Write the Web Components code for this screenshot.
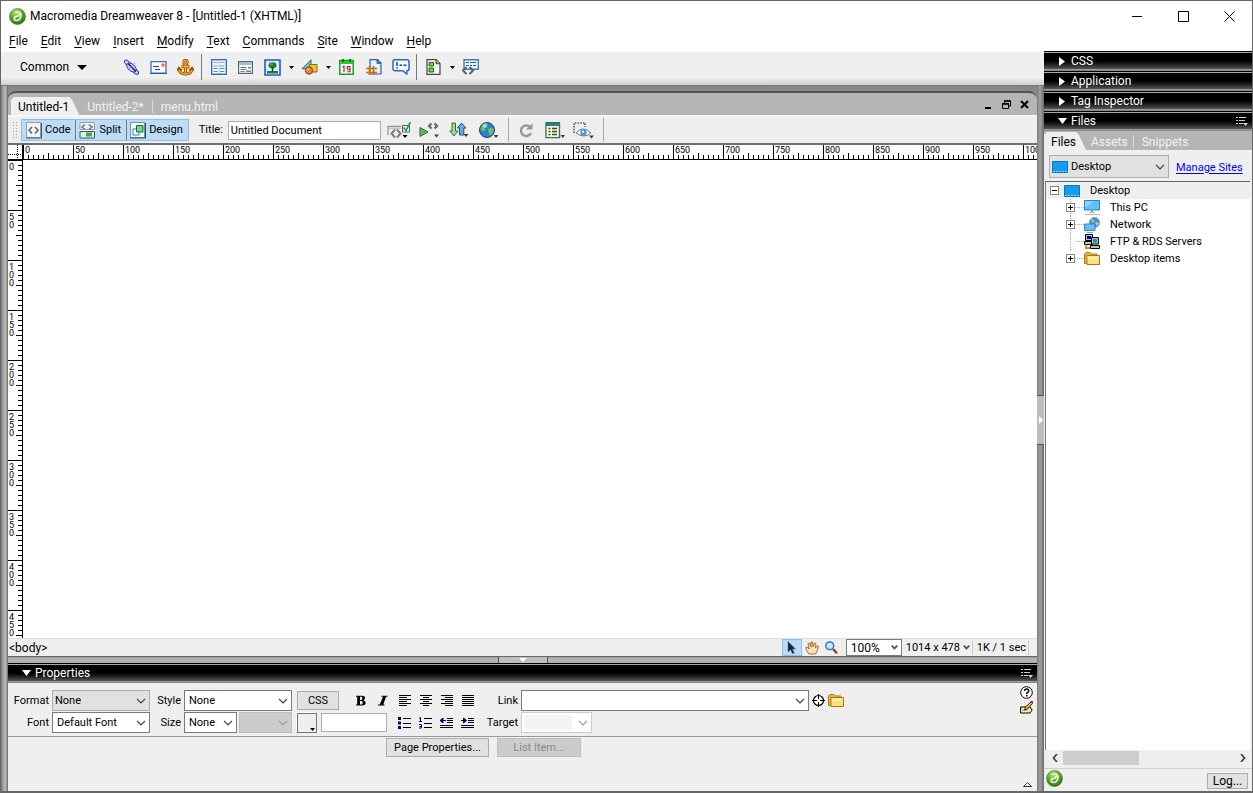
<!DOCTYPE html>
<html lang="en">
<head>
<meta charset="utf-8">
<title>Macromedia Dreamweaver 8</title>
<style>
  html, body { margin: 0; height: 100%; }
  body { font: 11px/14px Roboto, "Liberation Sans", sans-serif; color: #000; background: #555; overflow: hidden; }
</style>
</head>
<body>
<dw-app></dw-app>
<script>
const ICONS = {
  logo: [17, 17, `<defs><radialGradient id="g" cx=".4" cy=".25" r=".8"><stop offset="0" stop-color="#b4e878"/><stop offset=".5" stop-color="#58a828"/><stop offset="1" stop-color="#2a7014"/></radialGradient></defs><circle cx="8.500" cy="8.500" r="8" fill="url(#g)" stroke="#3c7a1c" stroke-width=".6"/><path d="M6.500 4.200Q12.200 3 12 7.500Q11.500 12.300 7.500 12.500Q4.800 12.300 5.200 10.200Q6 8 9.500 8Q9.500 6.500 11 5.500" fill="none" stroke="#f4ffe6" stroke-width="1.600"/>`],
  min: [11, 11, `<path d="M0 5.500h10" stroke="#000" fill="none"/>`],
  max: [11, 11, `<path d="M.5.5h10v10h-10z" stroke="#000" fill="none"/>`],
  close: [11, 11, `<path d="M.5.5l10 10M10.500.5l-10 10" stroke="#000" fill="none"/>`],
  down: [5, 3, `<path d="M0 0h5L2.500 3z"/>`],
  bigdown: [10, 5, `<path d="M0 0h10L5 5z"/>`],
  downlight: [9, 6, `<path d="M0 0h9L4.500 6z" fill="#fff"/>`],
  rightlight: [6, 9, `<path d="M0 0v9l6-4.500z" fill="#fff"/>`],
  handledown: [8, 4, `<path d="M0 0h8L4 4z" fill="#fff"/>`],
  handleright: [4, 8, `<path d="M0 0v8l4-4z" fill="#fff"/>`],
  uptri: [9, 5, `<path d="M.5 4.500h8L4.500.7z" fill="#fff" stroke="#000" stroke-width=".8"/>`],
  chev: [10, 6, `<path d="M1 1l4 4 4-4" fill="none" stroke="currentColor" stroke-width="1.200"/>`],
  chevs: [7, 5, `<path d="M.7.7L3.500 3.500 6.300.7" fill="none" stroke="#555" stroke-width="1.800"/>`],
  chevleft: [6, 8, `<path d="M5 0L1.500 4 5 8" fill="none" stroke="#444" stroke-width="1.800"/>`],
  chevright: [6, 8, `<path d="M1 0l3.500 4L1 8" fill="none" stroke="#444" stroke-width="1.800"/>`],
  options: [13, 10, `<path d="M0 1.500h2M0 4.500h2M0 7.500h2M3 1.500h7M3 4.500h6M3 7.500h4" stroke="#d0d0d0" stroke-width="1.200"/><path d="M7 7h5L9.500 10z" fill="#d0d0d0"/>`],
  link: [17, 17, `<g fill="#c3c7fa" stroke="#33339a" stroke-width=".9"><ellipse cx="5" cy="4.500" rx="4.600" ry="2.200" transform="rotate(42 5 4.500)"/><ellipse cx="12" cy="12" rx="4.600" ry="2.200" transform="rotate(42 12 12)"/><ellipse cx="8.500" cy="8.500" rx="5.600" ry="3.400" transform="rotate(42 8.500 8.500)"/></g><path d="M5 4.500l8 8" stroke="#15155a" stroke-width="1.200"/><path d="M5 10l7-6" stroke="#8d90dd"/>`],
  mail: [17, 13, `<path d="M1 .7h15v11.500H1z" fill="#f4faff" stroke="#3b6fc4" stroke-width="1.300"/><path d="M0 12.500h17" stroke="#2858a8"/><path d="M3 5.500h6M5 8.500h5" stroke="#2d3f66" stroke-width="1.200"/><path d="M11.500 2.500h3v3h-3z" fill="#f06a20"/>`],
  anchor: [17, 17, `<g fill="none" stroke="#a35200"><circle cx="8.500" cy="3" r="2" stroke-width="2.400"/><path d="M8.500 5v11M4.500 7.500h8" stroke-width="3.400"/><path d="M2 10Q2.500 15 8.500 15Q14.500 15 15 10M.7 12L2 9.500l2.500 2.200M16.300 12L15 9.500l-2.500 2.200" stroke-width="2.800"/></g><g fill="none" stroke="#f8ac34"><circle cx="8.500" cy="3" r="2"/><path d="M8.500 5v10M5 7.500h7M1.800 11Q4 15 8.500 15Q13 15 15.200 11" stroke-width="1.400"/></g>`],
  table: [16, 16, `<path d="M.7.7h14.600v14.600H.7z" fill="#fff" stroke="#3b6fb4" stroke-width="1.400"/><path d="M2.500 3.500h4M9 3.500h4.500M2.500 7h4M9 7h4.500M2.500 9.500h4M9 9.500h4.500M2.500 12.500h4M9 12.500h4.500" stroke="#4a8fc8"/><path d="M8 1v14" stroke="#8fb7dc"/><path d="M1 1h14v3H1z" fill="#b9dcf5" opacity=".4"/>`],
  layout: [15, 13, `<path d="M.6.6h13.800v11.800H.6z" fill="#fff" stroke="#516a80" stroke-width="1.200"/><path d="M1 1h13v3H1z" fill="#a9bccb"/><path d="M2.500 6.500h6M2.500 8.500h6M2.500 10.500h4" stroke="#678"/><path d="M10 6h3v1.500h-3zM8 9.500h5V11H8z" fill="#6c8f50"/>`],
  image: [17, 17, `<path d="M1 1h15v15H1z" fill="#d8efff" stroke="#2457dd" stroke-width="1.600"/><path d="M3 12h11v2.500H3z" fill="#1f7d28"/><ellipse cx="8.500" cy="6.300" rx="4" ry="3.100" fill="#1d7c2b"/><path d="M8.500 8.500v4" stroke="#45240c" stroke-width="1.400"/><circle cx="7.500" cy="5.300" r="1.300" fill="#4faf4d"/>`],
  media: [17, 16, `<path d="M10 .8v9H1z" fill="#78cdb8" stroke="#17705f"/><path d="M8.500 5.500h7.500v7.500H8.500z" fill="#efc62c" stroke="#8b6914"/><circle cx="8" cy="11.500" r="3.700" fill="#ee7a42" stroke="#a33b12"/><circle cx="7" cy="10.500" r="1.200" fill="#ffc49d"/>`],
  date: [15, 16, `<path d="M.8 1.500h13.400v13.700H.8z" fill="#fff" stroke="#18a020" stroke-width="1.500"/><path d="M1 2h13v3H1z" fill="#2cc935"/><path d="M4 0v3M11 0v3" stroke="#0a6a10" stroke-width="1.600"/><path d="M3.500 8L5 7.200V13M11 10.300H8.200V7.500H11v5.200H8.200" fill="none" stroke="#b0102a" stroke-width="1.100"/>`],
  include: [16, 16, `<path d="M4 .6h7.500L15 4v11H4z" fill="#e7effb" stroke="#2e5fb0" stroke-width="1.200"/><path d="M11 .6V4.400h4z" fill="#4c86dd" stroke="#2e5fb0"/><path d="M3.500 7v9M7.500 7v9M0 9.500h11M0 13.500h11" stroke="#c9700a" stroke-width="1.700"/>`],
  comment: [18, 16, `<path d="M3 .8h12q2 0 2 2v7q0 2-2 2l-.2 3.400-4-3.400H3.500q-2.500 0-2.500-2v-7q0-2 2-2z" fill="#f4f8ff" stroke="#2d63cc" stroke-width="1.500"/><path d="M5 3v4M5 8.300v1.500M7.500 6.300h2.500M11.500 6.300h3" stroke="#1b3f9c" stroke-width="1.500"/>`],
  template: [15, 16, `<path d="M1 .7h9L14 4.500v10.800H1z" fill="#f3f7ee" stroke="#444" stroke-width="1.200"/><path d="M10 .7v4h4" fill="#9cc27b" stroke="#444"/><path d="M3 3.500h4.500V7H3zM3 9h4.500v4H3z" fill="#86cf4c" stroke="#126d16"/>`],
  tagc: [17, 16, `<path d="M2 .7h14.300v9.600H2z" fill="#eef6ff" stroke="#3d7acb" stroke-width="1.400"/><path d="M4 3.500h3M8 3.500h6M4 6.500h3M8 6.500h2M11 6.500h3" stroke="#2858a8"/><path d="M4.500 8l-3.500 3.500L4.500 15M7.500 8l3.500 3.500L7.500 15" fill="none" stroke="#666" stroke-width="2.200"/>`],
  code: [16, 17, `<path d="M.5.5h14v15H.5z" fill="#f2f5f7" stroke="#8ba0ae"/><path d="M0 16h15.500V1" fill="none" stroke="#4a5a66" stroke-width="1.200"/><path d="M6 5L3 8.200 6 11.500M9 5l3 3.200L9 11.500" fill="none" stroke="#666" stroke-width="1.600"/>`],
  split: [17, 17, `<path d="M1 .5h14.500v7H1z" fill="#eef2f4" stroke="#8ba0ae"/><path d="M6 2.500L3 5 6 7.500M10 2.500l3 2.500L10 7.500" fill="none" stroke="#777" stroke-width="1.600"/><path d="M1 9.500h14.500v6.500H1z" fill="#dff3e4" stroke="#33586c"/><path d="M7 10.500h6v4H7z" fill="#46a255"/><path d="M0 8.500h17" stroke="#fff"/>`],
  design: [16, 17, `<path d="M.5.5h14v15H.5z" fill="#f4fafd" stroke="#6a96b6"/><path d="M0 16h15.500V1" fill="none" stroke="#27507c" stroke-width="1.200"/><path d="M3 7h6v6H3z" fill="#fff" stroke="#2a80b8"/><path d="M6.500 3.500h6.500v6.500H6.500z" fill="#7fd08f" stroke="#187331"/>`],
  validate: [24, 17, `<path d="M1 13V4.500h13" fill="none" stroke="#8a97a3" stroke-width="1.300"/><path d="M1 6.500h13" stroke="#bac3cb"/><path d="M8 7.500l-3.500 4L8 15.500M10 7.500l3.500 4-3.500 4" fill="none" stroke="#777" stroke-width="1.900"/><path d="M15.500 3.500h7v6.500h-7z" fill="#fff" stroke="#3b6550"/><path d="M16.500 5.500l2.500 3L23.500 0" fill="none" stroke="#2b9a3a" stroke-width="1.700"/><path d="M15.500 13h5l-2.500 3z"/>`],
  debug: [20, 16, `<path d="M1 5.500l8 4.500-8 4.500z" fill="#5fbb57" stroke="#1f6f2a"/><path d="M12.500 1.500L10 4l2.500 2.500M15.500 1.500L18 4l-2.500 2.500" fill="none" stroke="#666" stroke-width="2.200"/><path d="M15 12.500h5L17.500 15.500z" fill="#4e3e00"/>`],
  files: [20, 16, `<path d="M3 1h3.500v8H9L5 14 .8 9H3z" fill="#a6dc8f" stroke="#27713a"/><path d="M10.500 13V6H8.300L12.500 1 17 6h-2.200v7z" fill="#6aa9dc" stroke="#1e4f86"/><path d="M14.500 12h5L17 15z" fill="#4e3e00"/>`],
  globe: [20, 17, `<circle cx="8" cy="8" r="7.500" fill="#2a7fd0" stroke="#173f80"/><path d="M3 3q3-3 6-1.500L8 4 5.500 5.500l1 2L4 9.500 1.500 7zM9 7l4-1.500 2 2-1.500 4-3 2-1-3.500z" fill="#6cc25a"/><circle cx="6" cy="4" r="2" fill="#d8f3ff" opacity=".6"/><path d="M14.500 13h5L17 16z" fill="#4e3e00"/>`],
  refresh: [15, 15, `<path d="M10.500 3.500A5.300 5.300 0 1 0 12 10" fill="none" stroke="#999" stroke-width="2.400"/><path d="M13.500 0v6.500H7z" fill="#999"/>`],
  viewopt: [20, 17, `<path d="M1 .7h13.500v15H1z" fill="#fdf7cf" stroke="#2c6f6f" stroke-width="1.300"/><path d="M1 1h13.500v3H1z" fill="#2d8080"/><path d="M3.500 6.500h2M3.500 9.500h2M3.500 12.500h2M7 6.500h5M7 9.500h5M7 12.500h5" stroke="#394a40" stroke-width="1.300"/><path d="M15.500 13h4.500l-2.200 3z" fill="#4e3e00"/>`],
  visual: [21, 17, `<path d="M1 11V1h11v4" fill="none" stroke="#222" stroke-width="1.200" stroke-dasharray="1.500 1.200"/><path d="M3 11q7-8 15 0-7 6-15 0z" fill="#fff" stroke="#667788"/><circle cx="10.500" cy="10.500" r="3.200" fill="#4c94e0"/><circle cx="10" cy="9.700" r="1.200" fill="#dcf0ff"/><path d="M16 13.500h5L18.500 16.500z" fill="#4e3e00"/>`],
  dmin: [7, 9, `<path d="M0 8h6" stroke="#000" stroke-width="2"/>`],
  drest: [9, 9, `<path d="M2.500 3V1h6v5H7M.5 3.500h6v5h-6z" fill="none" stroke="#000"/><path d="M2 1h7M0 4h7" stroke="#000" stroke-width="1.600"/>`],
  dclose: [9, 9, `<path d="M1 1l7 7M8 1L1 8" stroke="#000" stroke-width="2"/>`],
  pointer: [9, 13, `<path d="M1 .5v10.500l2.500-2.300 2 4 1.800-.8-1.800-3.900h3z" fill="#12283c" stroke="#4d6a80" stroke-width=".5"/>`],
  hand: [14, 14, `<path d="M4 13Q1 9.500.7 6.500L2.300 6 4 8 3 2.500l1.500-.6L6 6V1h1.600L8 6l1.500-4 1.400.5L10.500 7l2-2.500 1 .7Q12.500 10 10.500 13z" fill="#fde0b4" stroke="#a0652f" stroke-width=".9"/>`],
  zoom: [13, 13, `<circle cx="4.800" cy="4.800" r="3.900" fill="#cfeaff" stroke="#3575cb" stroke-width="1.500"/><path d="M8 8l4 4.300" stroke="#a3402a" stroke-width="2.500"/>`],
  bold: [11, 11, `<path d="M0 .7h6q3 0 3 2.400 0 1.700-1.800 2.200Q9.700 5.800 9.700 7.800q0 2.700-3.500 2.700H0V9.500h1.200V1.700H0zM4 1.700V5h1.200q1.200 0 1.200-1.700T5.200 1.700zM4 6v3.500h1.300q1.400 0 1.400-1.800T5.300 6z" fill-rule="evenodd"/>`],
  italic: [10, 11, `<path d="M3.500.7h6v1H8L5.300 9.500H6.500v1H0v-1h1.800L5 1.700H3.500z"/>`],
  left: [12, 12, `<path d="M0 .5h12M0 2.500h8M0 4.500h12M0 6.500h8M0 8.500h12M0 10.500h8" stroke="#000"/>`],
  center: [12, 12, `<path d="M0 .5h12M3 2.500h6M0 4.500h12M3 6.500h6M0 8.500h12M3 10.500h6" stroke="#000"/>`],
  right: [12, 12, `<path d="M0 .5h12M4 2.500h8M0 4.500h12M4 6.500h8M0 8.500h12M4 10.500h8" stroke="#000"/>`],
  justify: [12, 12, `<path d="M0 .5h12M0 2.500h12M0 4.500h12M0 6.500h12M0 8.500h12M0 10.500h12" stroke="#000"/>`],
  ul: [13, 12, `<path d="M0 0h3v3H0zM0 4.500h3v3H0zM0 9h3v3H0z" fill="#000080"/><path d="M5 1.500h8M5 6.500h8M5 10.500h8" stroke="#000"/>`],
  ol: [13, 12, `<path d="M0 1.500l1.500-1v4M0 4.500h3M0 7.500h2.500v3.500H0M.5 9.500h2" fill="none" stroke="#000080"/><path d="M5 1.500h8M5 6.500h8M5 10.500h8" stroke="#000"/>`],
  outdent: [13, 12, `<path d="M7 1.500h6M7 3.500h6M7 5.500h6M0 8.500h13M0 10.500h13" stroke="#000" stroke-width="1.200"/><path d="M0 3.500L3 1v5zM3 3.500h3" fill="#000080" stroke="#000080"/>`],
  indent: [13, 12, `<path d="M7 1.500h6M7 3.500h6M7 5.500h6M0 8.500h13M0 10.500h13" stroke="#000" stroke-width="1.200"/><path d="M5.500 3.500L2.500 1v5zM0 3.500h3" fill="#000080" stroke="#000080"/>`],
  target: [13, 13, `<circle cx="6.500" cy="6.500" r="5" fill="#fff" stroke="#000" stroke-width="1.200"/><path d="M6.500 0v5M6.500 8v5M0 6.500h5M8 6.500h5" stroke="#000"/>`],
  folder: [16, 13, `<path d="M.5 11.500V2L2 .5h4L7.500 2H13v9.500z" fill="#e8b93e" stroke="#a97a18"/><path d="M2.800 3.500h12.700v9H3z" fill="#ffe07c" stroke="#a9780f"/><path d="M4 5h10M4 6.500h10" stroke="#fff4b8"/>`],
  help: [13, 13, `<circle cx="6.500" cy="6.500" r="5.800" fill="#fff" stroke="#000"/><path d="M4.500 5Q4.700 3 6.700 3t2 2q0 1-1.400 1.700-.6.400-.6 1.300" fill="none" stroke="#000" stroke-width="1.500"/><path d="M6 9h1.500v1.500H6z"/>`],
  pencil: [13, 13, `<path d="M.6 6h9.500l2 3-2 3H.6z" fill="#fff5a6" stroke="#000"/><path d="M2 9h6" stroke="#887"/><path d="M4.500 9l1-3L11 1l1.500 1.500L7.500 8z" fill="#f3bd43" stroke="#000" stroke-width=".8"/><path d="M10 0h3v2.500z" fill="#b32b1d"/>`],
  desktop: [16, 12, `<path d="M.5.5h15v11H.5z" fill="#149bf2" stroke="#0874bd"/><path d="M1 10.500h14" stroke="#9edbff" stroke-dasharray="2 1"/>`],
  pc: [16, 15, `<path d="M.5.5h15v9.500H.5z" fill="#61c0fa" stroke="#2583c4"/><path d="M1 8L10 1H1z" fill="#9cdcff" opacity=".7"/><path d="M5 12.500h6M1 14.500h15" stroke="#a8b8c4"/><path d="M8 10v2" stroke="#8c9fae" stroke-width="2"/>`],
  network: [16, 16, `<circle cx="10.500" cy="5.500" r="5" fill="#4d91c3" stroke="#7e9bb0"/><path d="M7 2l3 1-1 3zM11 5l4 1-2 3z" fill="#b5d9df"/><path d="M.5 7h10.500v6.500H.5z" fill="#62bff8" stroke="#3b86b8"/><path d="M3 15.500h6" stroke="#8c9fae"/>`],
  ftp: [16, 15, `<path d="M1.500.5h7v6h-7z" fill="#c0c0c0" stroke="#000"/><path d="M3 2h4v3H3z" fill="#0000a8"/><path d="M.5 7.500h8v3h-8z" fill="#c0c0c0" stroke="#000"/><path d="M7.500 3.500h7v6.500h-7z" fill="#c0c0c0" stroke="#000"/><path d="M9 5h4v3.500H9z" fill="#00a0a0"/><path d="M6.500 11.500h9v3h-9z" fill="#c0c0c0" stroke="#000"/><path d="M2 10.500v3.500h4" fill="none" stroke="#a99b16" stroke-width="1.800"/>`],
};

class DwIcon extends HTMLElement {
  connectedCallback() {
    const [w, h, body] = ICONS[this.getAttribute('name')];
    this.attachShadow({ mode: 'open' }).innerHTML =
      `<style>:host{display:inline-block;flex:none;width:${w}px;height:${h}px}svg{display:block}</style>
       <svg width="${w}" height="${h}" viewBox="0 0 ${w} ${h}" aria-hidden="true">${body}</svg>`;
  }
}

/* Icon-only push button; its cell width comes from the --w property. */
class DwTool extends HTMLElement {
  connectedCallback() {
    this.attachShadow({ mode: 'open' }).innerHTML = `
      <style>
        :host { display: block; flex: none; width: var(--w, 21px); height: var(--h, 21px); }
        button { display: flex; align-items: center; justify-content: center; width: 100%; height: 100%; padding: 0; border: 0; background: none; }
        :host([pressed]) button { background: #bcdcf4; border: 1px solid #90c0e8; }
      </style>
      <button type="button" aria-label="${this.getAttribute('label')}"><dw-icon name="${this.getAttribute('icon')}"></dw-icon></button>`;
  }
}

class DwSelect extends HTMLElement {
  connectedCallback() {
    const off = this.hasAttribute('disabled') ? 'disabled' : '';
    this.attachShadow({ mode: 'open' }).innerHTML = `
      <style>
        :host { display: grid; grid-template-columns: 1fr auto; align-items: center; box-sizing: border-box; height: 21px; background: #fff; border: 1px solid #7a7a7a; }
        select { appearance: none; grid-area: 1 / 1 / 2 / 3; min-width: 0; width: 100%; height: 100%; margin: 0; padding: 0 0 0 var(--pad, 4px); border: 0; background: none; font: inherit; color: #000; }
        dw-icon { grid-area: 1 / 2; margin-right: var(--cm, 3px); color: #444; pointer-events: none; }
        :host([filled]) { background: #e1e1e1; border-color: #adadad; }
        :host([disabled]) { background: #ccc; border-color: #bfbfbf; }
        :host([disabled]) dw-icon { color: #9a9a9a; }
        :host([pale]) { background: #fff; border-color: #ccc; }
        :host([pale]) select { background: linear-gradient(#f0f0f0, #f0f0f0) 2px 2px / 48px 15px no-repeat; }
        :host([bare]) { border: 0; background: none; }
      </style>
      <select aria-label="${this.getAttribute('label')}" ${off}><option>${this.getAttribute('value') || ''}</option></select>
      <dw-icon name="${this.getAttribute('chev') || 'chev'}"></dw-icon>`;
  }
}

class DwTitlebar extends HTMLElement {
  connectedCallback() {
    this.attachShadow({ mode: 'open' }).innerHTML = `
      <style>
        :host { display: flex; align-items: center; height: 30px; padding-left: 8px; background: #fff; font-size: 12px; }
        h1 { flex: 1; margin: 0 0 0 4px; font: inherit; }
        dw-tool { --w: 46px; --h: 28px; }
      </style>
      <dw-icon name="logo"></dw-icon>
      <h1>Macromedia Dreamweaver 8 - [Untitled-1 (XHTML)]</h1>
      <dw-tool icon="min" label="Minimize"></dw-tool><dw-tool icon="max" label="Maximize"></dw-tool><dw-tool icon="close" label="Close"></dw-tool>`;
  }
}

class DwMenubar extends HTMLElement {
  connectedCallback() {
    const items = ['File', 'Edit', 'View', 'Insert', 'Modify', 'Text', 'Commands', 'Site', 'Window', 'Help'];
    this.attachShadow({ mode: 'open' }).innerHTML = `
      <style>
        :host { display: flex; height: 20px; padding-left: 2px; background: #fff; font-size: 12px; }
        button { padding: 0 7px 0 6px; border: 0; background: none; font: inherit; color: inherit; }
        u { text-underline-offset: 2px; }
      </style>` + items.map(t => `<button type="button"><u>${t[0]}</u>${t.slice(1)}</button>`).join('');
  }
}

class DwInsertbar extends HTMLElement {
  connectedCallback() {
    this.attachShadow({ mode: 'open' }).innerHTML = `
      <style>
        :host { display: flex; align-items: center; height: 34px; box-sizing: border-box; padding-bottom: 3px; border-top: 1px solid #f8f8f8;
          background: linear-gradient(#efefef 0, #efefef 78%, #cfcfcf 100%); }
        .cat { display: flex; align-items: center; gap: 8px; width: 117px; padding: 0 0 0 19px; border: 0; background: none; font: inherit; font-size: 12px; color: inherit; }
        dw-tool { --w: 27px; --h: 24px; }
        .dd { --w: 10px; }
        i { width: 1px; height: 26px; margin: 0 3px 0 2px; background: #777; }
      </style>
      <button class="cat" type="button">Common <dw-icon name="bigdown"></dw-icon></button>
      <dw-tool icon="link" label="Hyperlink"></dw-tool><dw-tool icon="mail" label="Email Link"></dw-tool><dw-tool icon="anchor" label="Named Anchor"></dw-tool>
      <i></i>
      <dw-tool icon="table" label="Table"></dw-tool><dw-tool icon="layout" label="Insert Div Tag"></dw-tool><dw-tool icon="image" label="Images"></dw-tool><dw-tool class="dd" icon="down" label="Images menu"></dw-tool>
      <dw-tool icon="media" label="Media"></dw-tool><dw-tool class="dd" icon="down" label="Media menu"></dw-tool>
      <dw-tool icon="date" label="Date"></dw-tool><dw-tool icon="include" label="Server-Side Include"></dw-tool><dw-tool icon="comment" label="Comment"></dw-tool>
      <i></i>
      <dw-tool icon="template" label="Templates"></dw-tool><dw-tool class="dd" icon="down" label="Templates menu"></dw-tool>
      <dw-tool icon="tagc" label="Tag Chooser"></dw-tool>`;
  }
}

/* Tab strip: the first name is the open tab. */
class DwTabs extends HTMLElement {
  connectedCallback() {
    const names = this.getAttribute('names').split(',');
    this.attachShadow({ mode: 'open' }).innerHTML = `
      <style>
        :host { display: flex; align-items: flex-end; font-size: 12px; line-height: 14px; }
        button { box-sizing: border-box; height: 18px; padding: 2px var(--tp, 8px) 0; border: 0; background: none; font: inherit; color: #f2f2f2; white-space: nowrap; }
        .on { padding: 2px 10px 0 7px; color: #000; background: #efefef; clip-path: polygon(0 3px, 3px 0, calc(100% - 10px) 0, calc(100% - 7px) 3px, 100% 100%, 0 100%); }
        .off + .off { padding-left: 9px; background: linear-gradient(#ddd, #ddd) 0 3px / 1px 13px no-repeat; }
      </style>` + names.map((n, i) => `<button type="button" class="${i ? 'off' : 'on'}">${n}</button>`).join('');
  }
}

class DwDocbar extends HTMLElement {
  connectedCallback() {
    this.attachShadow({ mode: 'open' }).innerHTML = `
      <style>
        :host { display: flex; align-items: center; box-sizing: border-box; height: 30px; padding-top: 2px; background: linear-gradient(#fafafa, #eee 3px, #eee); border-bottom: 2px solid #6e6e6e; }
        .grip { width: 5px; height: 18px; margin: 0 4px; background: radial-gradient(circle, #999 0 1px, transparent 1px) 0 0 / 3px 3px; }
        .modes { display: flex; height: 20px; border: 1px solid #8fbfe6; background: #bddcf4; }
        .modes button { display: flex; align-items: center; gap: 3px; padding: 0 5px 0 4px; border: 0; background: none; font: inherit; color: #000; }
        .modes button + button { border-left: 1px solid #5f7f9a; padding-left: 3px; }
        label { margin: 0 5px 0 10px; }
        input { box-sizing: border-box; width: 153px; height: 19px; margin: 0 3px 0 0; padding: 0 2px; border: 1px solid #aaadb4; font: inherit; color: #000; }
        dw-tool { --w: 30px; --h: 24px; }
        .n { --w: 28px; }
        i { width: 1px; height: 24px; margin: 0 4px; background: #aaa; }
      </style>
      <span class="grip"></span>
      <div class="modes"><button type="button"><dw-icon name="code"></dw-icon>Code</button><button type="button"><dw-icon name="split"></dw-icon>Split</button><button type="button"><dw-icon name="design"></dw-icon>Design</button></div>
      <label for="t">Title:</label><input id="t" value="Untitled Document">
      <dw-tool icon="validate" label="Validate"></dw-tool><dw-tool icon="debug" label="Browser check"></dw-tool><dw-tool icon="files" label="File management"></dw-tool><dw-tool icon="globe" label="Preview"></dw-tool>
      <i></i><dw-tool class="n" icon="refresh" label="Refresh"></dw-tool><dw-tool class="n" icon="viewopt" label="View Options"></dw-tool><dw-tool icon="visual" label="Visual Aids"></dw-tool><i></i>`;
  }
}

/* Design canvas with a ruler on the top and on the left; one tick each 5px. */
class DwCanvas extends HTMLElement {
  connectedCallback() {
    const root = this.attachShadow({ mode: 'open' });
    root.innerHTML = `
      <style>
        :host { flex: 1; min-height: 0; display: grid; grid-template: 15px 1fr / 15px 1fr; background: #fff; font-size: 9px; line-height: 8px; }
        .c { border-right: 1px solid #000; border-bottom: 1px solid #000; background:
          repeating-linear-gradient(90deg, #000 0 1px, transparent 1px 2px) 0 9px / 100% 1px no-repeat,
          repeating-linear-gradient(#000 0 1px, transparent 1px 2px) 9px 0 / 1px 100% no-repeat; }
        .h, .v { display: flex; overflow: hidden; min-width: 0; min-height: 0; }
        .h { border-bottom: 1px solid #000; background:
          linear-gradient(90deg, #000 1px, transparent 1px) 0 0 / 50px 14px repeat-x,
          linear-gradient(90deg, #000 1px, transparent 1px) 25px 100% / 50px 6px repeat-x,
          linear-gradient(90deg, #000 1px, transparent 1px) 0 100% / 5px 4px repeat-x; }
        .h span { flex: none; box-sizing: border-box; width: 50px; padding: 1px 0 0 2px; }
        .v { flex-direction: column; border-right: 1px solid #000; background:
          linear-gradient(#000 1px, transparent 1px) 0 0 / 14px 50px repeat-y,
          linear-gradient(#000 1px, transparent 1px) 100% 25px / 6px 50px repeat-y,
          linear-gradient(#000 1px, transparent 1px) 100% 0 / 4px 5px repeat-y; }
        .v span { flex: none; box-sizing: border-box; width: 7px; height: 50px; padding: 3px 0 0 1px; word-break: break-all; }
      </style>
      <div class="c"></div><div class="h"></div><div class="v"></div><div></div>`;
    const marks = px => Array.from({ length: Math.ceil(px / 50) }, (_, i) => `<span>${i * 50}</span>`).join('');
    const h = root.querySelector('.h'), v = root.querySelector('.v');
    new ResizeObserver(() => {
      h.innerHTML = marks(h.clientWidth);
      v.innerHTML = marks(v.clientHeight);
    }).observe(this);
  }
}

class DwStatus extends HTMLElement {
  connectedCallback() {
    this.attachShadow({ mode: 'open' }).innerHTML = `
      <style>
        :host { display: flex; align-items: center; height: 17px; padding-right: 8px; border-top: 1px solid #e0e0e0; background: #efefef; border-bottom: 1px solid #666; }
        a { flex: 1; padding-left: 1px; font-size: 12px; color: inherit; text-decoration: none; }
        dw-tool { --w: 20px; --h: 17px; }
        dw-select { height: 17px; --cm: 3px; }
        .z { width: 56px; margin: 0 4px; font-size: 12px; }
        .s { width: 64px; --pad: 0px; --cm: 0px; margin-right: 2px; }
        .k { padding: 0 2px 0 4px; border: solid #ccc; border-width: 0 1px; font-size: 11px; }
      </style>
      <a href="#body">&lt;body&gt;</a>
      <dw-tool icon="pointer" label="Select" pressed></dw-tool><dw-tool icon="hand" label="Hand"></dw-tool><dw-tool icon="zoom" label="Zoom"></dw-tool>
      <dw-select class="z" label="Magnification" value="100%" chev="chevs"></dw-select>
      <dw-select class="s" bare label="Window size" value="1014 x 478" chev="chevs"></dw-select>
      <span class="k">1K / 1 sec</span>`;
  }
}

class DwDocument extends HTMLElement {
  connectedCallback() {
    this.attachShadow({ mode: 'open' }).innerHTML = `
      <style>
        :host { flex: 1; min-height: 0; display: flex; flex-direction: column; }
        .bar { display: flex; align-items: flex-end; height: 22px; padding: 0 4px 0 3px; border-top: 2px solid #555; border-radius: 8px 8px 0 0; background: #b5b5b5; }
        dw-tabs { flex: 1; }
        dw-tool { --w: 18px; --h: 22px; }
      </style>
      <div class="bar"><dw-tabs names="Untitled-1,Untitled-2*,menu.html"></dw-tabs><dw-tool icon="dmin" label="Minimize document"></dw-tool><dw-tool icon="drest" label="Restore document"></dw-tool><dw-tool icon="dclose" label="Close document"></dw-tool></div>
      <dw-docbar></dw-docbar><dw-canvas></dw-canvas><dw-status></dw-status>`;
  }
}

class DwHeader extends HTMLElement {
  connectedCallback() {
    const open = this.hasAttribute('open');
    this.attachShadow({ mode: 'open' }).innerHTML = `
      <style>
        :host { display: flex; align-items: center; box-sizing: border-box; height: 20px; padding-right: 3px; color: #fff; font-size: 12px;
          background: linear-gradient(#000 0 1px, #aaa 1px 2px, #000 2px 10px, #1c1c1c 13px, #555 18px, #999 18px 19px, #888 19px); }
        button { display: flex; align-items: center; flex: 1; gap: 4px; height: 18px; padding: 0 0 0 13px; border: 0; background: none; font: inherit; color: inherit; }
        span { display: flex; justify-content: center; width: 10px; }
        dw-tool { --w: 14px; --h: 18px; }
      </style>
      <button type="button" aria-expanded="${open}"><span><dw-icon name="${open ? 'downlight' : 'rightlight'}"></dw-icon></span><slot></slot></button>
      ${open ? '<dw-tool icon="options" label="Panel options"></dw-tool>' : ''}`;
  }
}

class DwProperties extends HTMLElement {
  connectedCallback() {
    this.attachShadow({ mode: 'open' }).innerHTML = `
      <style>
        :host { display: block; background: #efefef; }
        .top { display: flex; justify-content: space-between; padding: 2px 3px 3px 2px; border-bottom: 1px solid #999; }
        form { display: grid; grid-template-columns: 42px 98px 34px 108px 102px 84px 43px 288px auto; grid-auto-rows: 21px; row-gap: 1px; align-items: center; padding-top: 5px; }
        label { padding-right: 3px; text-align: right; }
        .r { display: flex; align-items: center; }
        .btn { height: 19px; box-sizing: border-box; padding: 0; border: 1px solid #adadad; background: #e1e1e1; font: inherit; color: #000; }
        .btn:disabled { background: #ccc; border-color: #bfbfbf; color: #888; }
        .css { width: 42px; margin: 0 12px 0 5px; }
        .half { width: 53px; }
        .half + .half { margin-left: 2px; }
        .sw { display: flex; align-items: flex-end; justify-content: flex-end; width: 21px; height: 21px; box-sizing: border-box; margin: 0 4px; padding: 1px; border: 1px solid; border-color: #fff #777 #777 #fff; background: #efefef; box-shadow: inset 1px 1px #777; }
        input { box-sizing: border-box; width: 66px; height: 19px; margin: 0; border: 1px solid #aaadb4; font: inherit; }
        .tg { width: 71px; }
        aside { display: flex; flex-direction: column; align-items: center; }
        aside dw-tool { --w: 15px; --h: 15px; }
        .low { display: flex; gap: 8px; height: 53px; padding: 1px 3px 0 378px; }
        .pp { width: 103px; } .li { width: 84px; }
        .low dw-tool { --w: 13px; --h: 13px; margin: auto 0 0 auto; }
      </style>
      <dw-header open>Properties</dw-header>
      <div class="top">
        <form>
          <label>Format</label><dw-select filled label="Format" value="None" style="--pad:2px"></dw-select>
          <label>Style</label><dw-select label="Style" value="None"></dw-select>
          <div class="r"><button class="btn css" type="button">CSS</button><dw-tool icon="bold" label="Bold"></dw-tool><dw-tool icon="italic" label="Italic"></dw-tool></div>
          <div class="r"><dw-tool icon="left" label="Align Left"></dw-tool><dw-tool icon="center" label="Align Center"></dw-tool><dw-tool icon="right" label="Align Right"></dw-tool><dw-tool icon="justify" label="Justify"></dw-tool></div>
          <label>Link</label><dw-select label="Link"></dw-select>
          <div class="r" style="--w:18px"><dw-tool icon="target" label="Point to File"></dw-tool><dw-tool icon="folder" label="Browse"></dw-tool></div>
          <label>Font</label><dw-select label="Font" value="Default Font"></dw-select>
          <label>Size</label><div class="r"><dw-select class="half" label="Size" value="None"></dw-select><dw-select class="half" disabled label="Units"></dw-select></div>
          <div class="r"><button class="sw" type="button" aria-label="Text color"><dw-icon name="down"></dw-icon></button><input aria-label="Color value"></div>
          <div class="r"><dw-tool icon="ul" label="Unordered List"></dw-tool><dw-tool icon="ol" label="Ordered List"></dw-tool><dw-tool icon="outdent" label="Outdent"></dw-tool><dw-tool icon="indent" label="Indent"></dw-tool></div>
          <label>Target</label><dw-select class="tg" disabled pale label="Target"></dw-select>
        </form>
        <aside><dw-tool icon="help" label="Help"></dw-tool><dw-tool icon="pencil" label="Quick Tag Editor"></dw-tool></aside>
      </div>
      <div class="low"><button class="btn pp" type="button">Page Properties...</button><button class="btn li" type="button" disabled>List Item...</button><dw-tool icon="uptri" label="Collapse"></dw-tool></div>`;
  }
}

/* Bar between panes with a collapse handle; vertical unless "row" is set. */
class DwSplitter extends HTMLElement {
  connectedCallback() {
    const row = this.hasAttribute('row');
    this.attachShadow({ mode: 'open' }).innerHTML = `
      <style>
        :host { display: flex; flex: none; align-items: center; justify-content: center; background: linear-gradient(90deg, #777, #999 2px, #999 4px, #666); width: 7px; padding-bottom: 37px; }
        :host([row]) { width: auto; height: 6px; padding: 0; background: linear-gradient(#999, #b4b4b4 2px, #b0b0b0); }
        button { display: flex; align-items: center; justify-content: center; width: 7px; height: 50px; box-sizing: border-box; padding: 0; border: solid #555; border-width: 1px 0; background: #bdbdbd; }
        :host([row]) button { width: 50px; height: 6px; border-width: 0 1px; }
      </style>
      <button type="button" aria-label="Collapse panels"><dw-icon name="${row ? 'handledown' : 'handleright'}"></dw-icon></button>`;
  }
}

class DwNode extends HTMLElement {
  connectedCallback() {
    const mark = this.getAttribute('mark') || '';
    this.attachShadow({ mode: 'open' }).innerHTML = `
      <style>
        :host { display: flex; align-items: center; height: 17px; padding-left: 20px; }
        :host([root]) { padding-left: 4px; background: #efefef; }
        .b { display: grid; place-items: center; width: 9px; height: 17px; background: linear-gradient(#aaa 50%, transparent 50%) 4px 0 / 1px 2px repeat-y; }
        :host([root]) .b { background: none; }
        :host([last]) .b { background-size: 1px 2px; background-repeat: no-repeat; }
        .m { width: 7px; height: 7px; border: 1px solid #888; background: linear-gradient(#000, #000) 1px 3px / 5px 1px no-repeat, #fff; }
        .p { background: linear-gradient(#000, #000) 1px 3px / 5px 1px no-repeat, linear-gradient(#000, #000) 3px 1px / 1px 5px no-repeat, #fff; }
        .d { width: 9px; height: 1px; background: repeating-linear-gradient(90deg, #aaa 0 1px, transparent 1px 2px); }
        :host([root]) .d { width: 5px; background: none; }
        dw-icon { margin-right: 10px; }
      </style>
      <span class="b">${mark ? `<span class="m ${mark === '+' ? 'p' : ''}"></span>` : ''}</span><span class="d"></span><dw-icon name="${this.getAttribute('icon')}"></dw-icon><slot></slot>`;
  }
}

class DwFiles extends HTMLElement {
  connectedCallback() {
    this.attachShadow({ mode: 'open' }).innerHTML = `
      <style>
        :host { flex: 1; min-height: 0; display: flex; flex-direction: column; background: #efefef; }
        .tabs { flex: none; padding-top: 1px; background: #b5b5b5; }
        dw-tabs { --tp: 5px; }
        .row { display: flex; flex: none; align-items: center; gap: 7px; box-sizing: border-box; height: 31px; padding: 2px 6px 0 5px; }
        .pick { display: grid; grid-template-columns: 120px; align-items: center; }
        .pick > * { grid-area: 1 / 1; }
        .pick dw-select { height: 23px; --pad: 21px; }
        .pick dw-icon { margin-left: 3px; pointer-events: none; z-index: 1; }
        a { padding-top: 2px; color: #00f; text-underline-offset: 2px; white-space: nowrap; }
        .tree { flex: 1; min-height: 0; margin: 0 2px 0 1px; border-top: 1px solid #666; border-left: 1px solid #777; background: #fff; }
        .sb { display: grid; grid-template-columns: 17px 76px 1fr 17px; place-items: center; height: 16px; margin: 0 1px 2px 2px; }
        .th { grid-column: 2; width: 100%; height: 14px; background: #cdcdcd; }
        .sb :last-child { grid-column: 4; }
        footer { display: flex; align-items: center; justify-content: space-between; height: 22px; padding: 0 4px 0 2px; border-top: 1px solid #d0d0d0; }
        footer dw-icon { margin-bottom: 4px; }
        footer button { width: 41px; height: 16px; box-sizing: border-box; align-self: flex-end; margin-bottom: 2px; padding: 0; border: 1px solid #adadad; background: #e1e1e1; font: inherit; font-size: 12px; line-height: 12px; color: #000; }
      </style>
      <div class="tabs"><dw-tabs names="Files,Assets,Snippets"></dw-tabs></div>
      <div class="row"><div class="pick"><dw-select filled label="Site" value="Desktop"></dw-select><dw-icon name="desktop"></dw-icon></div><a href="#sites">Manage Sites</a></div>
      <div class="tree">
        <dw-node root mark="-" icon="desktop">Desktop</dw-node>
        <dw-node mark="+" icon="pc">This PC</dw-node>
        <dw-node mark="+" icon="network">Network</dw-node>
        <dw-node icon="ftp">FTP &amp; RDS Servers</dw-node>
        <dw-node last mark="+" icon="folder">Desktop items</dw-node>
      </div>
      <div class="sb"><dw-icon name="chevleft"></dw-icon><span class="th"></span><dw-icon name="chevright"></dw-icon></div>
      <footer><dw-icon name="logo"></dw-icon><button type="button">Log...</button></footer>`;
  }
}

class DwApp extends HTMLElement {
  connectedCallback() {
    this.attachShadow({ mode: 'open' }).innerHTML = `
      <style>
        :host { display: flex; flex-direction: column; box-sizing: border-box; height: 100vh; padding: 1px 1px 2px 1px; background: #666; }
        .main { flex: 1; min-height: 0; display: grid; grid-template-columns: 1fr 208px; background: #999; }
        .l, .docs, .r { display: flex; flex-direction: column; min-width: 0; min-height: 0; }
        .work { flex: 1; min-height: 0; display: flex; border-top: 1px solid #777; background: linear-gradient(90deg, #777, #b0b0b0 3px, #b0b0b0 5px, #666 7px, #888 8px); }
        .docs { flex: 1; padding: 5px 0 0 7px; background: linear-gradient(#888, #888) 7px 0 / 100% 9px no-repeat; }
      </style>
      <dw-titlebar></dw-titlebar>
      <dw-menubar></dw-menubar>
      <div class="main">
        <div class="l">
          <dw-insertbar></dw-insertbar>
          <div class="work">
            <div class="docs"><dw-document></dw-document><dw-splitter row></dw-splitter><dw-properties></dw-properties></div>
            <dw-splitter></dw-splitter>
          </div>
        </div>
        <div class="r">
          <dw-header>CSS</dw-header><dw-header>Application</dw-header><dw-header>Tag Inspector</dw-header><dw-header open>Files</dw-header>
          <dw-files></dw-files>
        </div>
      </div>`;
  }
}

for (const [name, cls] of Object.entries({
  'dw-icon': DwIcon, 'dw-tool': DwTool, 'dw-select': DwSelect, 'dw-titlebar': DwTitlebar, 'dw-menubar': DwMenubar,
  'dw-insertbar': DwInsertbar, 'dw-tabs': DwTabs, 'dw-docbar': DwDocbar, 'dw-canvas': DwCanvas, 'dw-status': DwStatus,
  'dw-document': DwDocument, 'dw-header': DwHeader, 'dw-properties': DwProperties, 'dw-splitter': DwSplitter,
  'dw-node': DwNode, 'dw-files': DwFiles, 'dw-app': DwApp })) customElements.define(name, cls);
</script>
</body>
</html>
